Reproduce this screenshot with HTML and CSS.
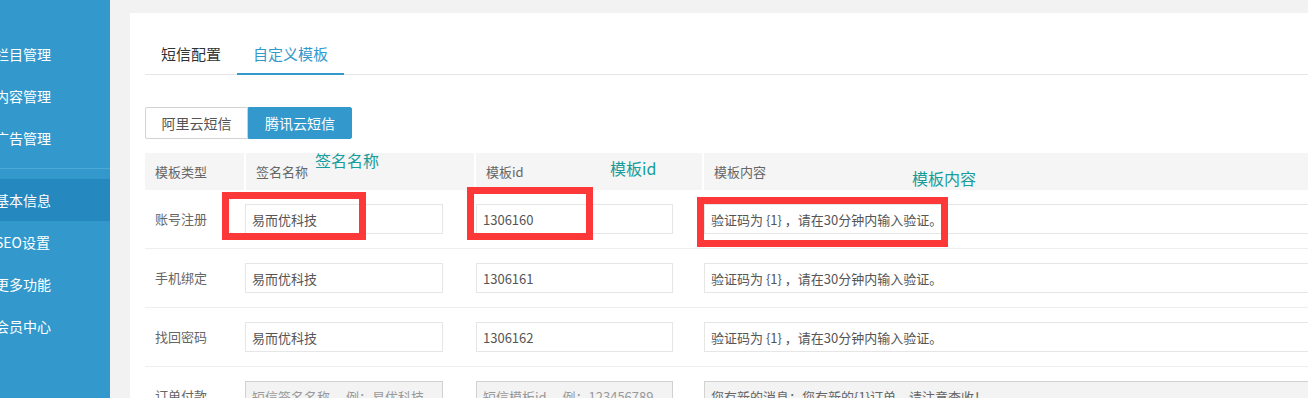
FILE: index.html
```html
<!DOCTYPE html>
<html lang="zh-CN">
<head>
<meta charset="utf-8">
<title>短信配置 - 自定义模板</title>
<link rel="stylesheet" href="styles.css">
</head>
<body>
<div class="app">
  <aside class="sidebar">
    <ul class="menu">
      <li class="menu-item"><span>栏目管理</span></li>
      <li class="menu-item"><span>内容管理</span></li>
      <li class="menu-item"><span>广告管理</span></li>
    </ul>
    <div class="divider"></div>
    <ul class="menu">
      <li class="menu-item active"><span>基本信息</span></li>
      <li class="menu-item"><span>SEO设置</span></li>
      <li class="menu-item"><span>更多功能</span></li>
      <li class="menu-item"><span>会员中心</span></li>
    </ul>
  </aside>
  <main class="main">
    <section class="panel">
      <ul class="tabs">
        <li class="tab">短信配置</li>
        <li class="tab on">自定义模板</li>
      </ul>
      <div class="btn-group">
        <button class="btn">阿里云短信</button>
        <button class="btn btn-primary">腾讯云短信</button>
      </div>
      <div class="tpl-table">
        <div class="row head">
          <div class="hcell">模板类型</div>
          <div class="hcell">签名名称</div>
          <div class="hcell">模板id</div>
          <div class="hcell">模板内容</div>
        </div>
        <div class="row">
          <div class="label">账号注册</div>
          <div class="cell"><input class="ipt ipt-sign" value="易而优科技"></div>
          <div class="cell"><input class="ipt ipt-id" value="1306160"></div>
          <div class="cell"><input class="ipt ipt-content" value="验证码为 {1} ，请在30分钟内输入验证。"></div>
        </div>
        <div class="row">
          <div class="label">手机绑定</div>
          <div class="cell"><input class="ipt ipt-sign" value="易而优科技"></div>
          <div class="cell"><input class="ipt ipt-id" value="1306161"></div>
          <div class="cell"><input class="ipt ipt-content" value="验证码为 {1} ，请在30分钟内输入验证。"></div>
        </div>
        <div class="row">
          <div class="label">找回密码</div>
          <div class="cell"><input class="ipt ipt-sign" value="易而优科技"></div>
          <div class="cell"><input class="ipt ipt-id" value="1306162"></div>
          <div class="cell"><input class="ipt ipt-content" value="验证码为 {1} ，请在30分钟内输入验证。"></div>
        </div>
        <div class="row">
          <div class="label">订单付款</div>
          <div class="cell"><input class="ipt ipt-sign ipt-off" placeholder="短信签名名称， 例：易优科技"></div>
          <div class="cell"><input class="ipt ipt-id ipt-off" placeholder="短信模板id， 例：123456789"></div>
          <div class="cell"><input class="ipt ipt-content ipt-off" value="您有新的消息：您有新的{1}订单，请注意查收！"></div>
        </div>
      </div>
    </section>
  </main>
</div>

<div class="mark mark-sign"></div>
<div class="mark mark-id"></div>
<div class="mark mark-content"></div>
<span class="note note-sign">签名名称</span>
<span class="note note-id">模板id</span>
<span class="note note-content">模板内容</span>
</body>
</html>
```

FILE: styles.css
```css
* { box-sizing: border-box; }

html, body {
  margin: 0;
  padding: 0;
  width: 1308px;
  height: 398px;
  overflow: hidden;
}

body {
  position: relative;
  background: #f2f2f2;
  font-family: "Noto Sans CJK SC", "Noto Sans", sans-serif;
  color: #666;
}

.app {
  display: flex;
  align-items: flex-start;
  height: 398px;
  overflow: hidden;
}

/* sidebar */
.sidebar {
  flex: none;
  width: 110px;
  height: 398px;
  background: #3399cc;
  padding-top: 33px;
  overflow: hidden;
}

.menu {
  list-style: none;
  margin: 0;
  padding: 0;
}

.menu-item {
  height: 42px;
  line-height: 42px;
  font-size: 14px;
  color: #fff;
  white-space: nowrap;
}

.menu-item span {
  display: block;
  margin-left: -5px;
}

.menu-item.active {
  background: #2589c0;
}

.divider {
  height: 1px;
  margin: 9px 0 10px;
  background: #4ea8d6;
}

/* main */
.main {
  flex: none;
  width: 1400px;
  height: 398px;
  padding: 13px 0 0 20px;
}

.panel {
  background: #fff;
  height: 385px;
  padding: 21px 0 0 15px;
  overflow: hidden;
}

.tabs {
  list-style: none;
  margin: 0;
  padding: 0;
  display: flex;
  height: 41px;
  border-bottom: 1px solid #e6e6e6;
}

.tab {
  height: 41px;
  line-height: 40px;
  padding: 0 16px;
  font-size: 15px;
  color: #333;
}

.tab.on {
  color: #3399cc;
  border-bottom: 2px solid #3399cc;
}

.btn-group {
  display: flex;
  margin-top: 32px;
}

.btn {
  height: 32px;
  width: 103px;
  padding: 0;
  border: 1px solid #d2d2d2;
  background: #fff;
  color: #555;
  font-family: inherit;
  font-size: 14px;
  line-height: 30px;
  white-space: nowrap;
  text-align: center;
  border-radius: 2px 0 0 2px;
}

.btn-primary {
  width: 104px;
  background: #3399cc;
  border-color: #3399cc;
  color: #fff;
  border-radius: 0 2px 2px 0;
}

/* table */
.tpl-table {
  margin-top: 14px;
}

.row {
  display: grid;
  grid-template-columns: 99px 228px 226px 1fr;
  column-gap: 2px;
  padding: 14px 0;
  border-bottom: 1px solid #eee;
}

.row.head {
  padding: 0;
  border-bottom: 0;
}

.hcell {
  height: 37px;
  line-height: 37px;
  padding-left: 10px;
  background: #f5f5f5;
  font-size: 13px;
  color: #666;
}

.label {
  padding-left: 10px;
  line-height: 30px;
  font-size: 13px;
  color: #666;
}

.cell {
  display: flex;
}

.ipt {
  height: 30px;
  border: 1px solid #e6e6e6;
  background: #fff;
  padding: 0 6px;
  font-family: inherit;
  font-size: 13px;
  color: #555;
  outline: none;
}

.ipt-sign {
  width: 198px;
  margin-left: -1px;
}

.ipt-id {
  width: 197px;
}

.ipt-content {
  width: 700px;
}

.ipt-off {
  background: #f3f3f3;
  border-color: #d2d2d2;
  color: #666;
}

.ipt-off::placeholder {
  color: #999;
}

/* annotations drawn over the screenshot */
.mark {
  position: absolute;
  border: 7px solid #fd3838;
}

.mark-sign {
  left: 222px;
  top: 192px;
  width: 144px;
  height: 48px;
}

.mark-id {
  left: 467px;
  top: 187px;
  width: 126px;
  height: 53px;
}

.mark-content {
  left: 697px;
  top: 197px;
  width: 251px;
  height: 50px;
}

.note {
  position: absolute;
  font-size: 16px;
  line-height: 20px;
  color: #179c9a;
  white-space: nowrap;
}

.note-sign { left: 315px; top: 150px; }
.note-id { left: 610px; top: 158px; }
.note-content { left: 912px; top: 168px; }
```
